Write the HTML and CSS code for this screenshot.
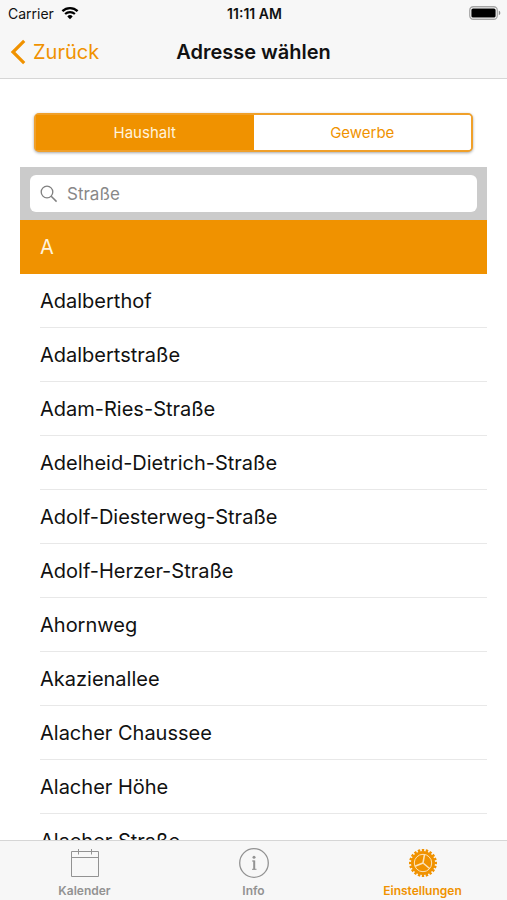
FILE: index.html
```html
<!DOCTYPE html>
<html lang="de">
<head>
<meta charset="utf-8">
<meta name="viewport" content="width=device-width, initial-scale=1">
<title>Adresse wählen</title>
<link rel="stylesheet" href="styles.css">
</head>
<body>
<header class="top">
  <div class="status">
    <span class="carrier">Carrier
      <svg class="wifi" width="18" height="14" viewBox="0 0 18 14" aria-hidden="true"><path d="M1.4 5.1a11 11 0 0 1 15.2 0" fill="none" stroke="#000" stroke-width="2.3"/><path d="M4.1 8.1a7 7 0 0 1 9.8 0" fill="none" stroke="#000" stroke-width="2.1"/><path d="M9 13.2 6.3 10.4a3.9 3.9 0 0 1 5.4 0z"/></svg>
    </span>
    <span class="time">11:11 AM</span>
    <svg class="battery" width="32" height="14" viewBox="0 0 32 14" aria-hidden="true"><rect x="0.75" y="0.75" width="27.5" height="12.5" rx="3.5" fill="#fff" stroke="#a5a5a5" stroke-width="1.3"/><rect x="2.4" y="2.4" width="24.2" height="9.2" rx="1.6"/><path d="M29.8 4.8c2 .6 2 3.8 0 4.4z" fill="#8a8a8a"/></svg>
  </div>
  <nav class="navbar">
    <a class="back" href="#"><svg width="16" height="26" viewBox="0 0 16 26" aria-hidden="true"><path d="M14.2 1.8 3 13l11.2 11.2" fill="none" stroke="currentColor" stroke-width="3.2"/></svg>Zurück</a>
    <h1 class="title">Adresse wählen</h1>
    <span></span>
  </nav>
</header>
<main class="content">
  <div class="segments">
    <button class="segment active" type="button" aria-pressed="true">Haushalt</button>
    <button class="segment" type="button" aria-pressed="false">Gewerbe</button>
  </div>
  <section class="panel">
    <div class="search">
      <label class="field">
        <svg width="18" height="18" viewBox="0 0 18 18" aria-hidden="true"><circle cx="7" cy="7" r="5.8" fill="none" stroke="#808080" stroke-width="1.3"/><path d="m11.2 11.2 5.4 5.4" stroke="#808080" stroke-width="1.5"/></svg>
        <input type="search" placeholder="Straße" aria-label="Straße">
      </label>
    </div>
    <h2 class="letter">A</h2>
    <ul class="streets">
      <li>Adalberthof</li>
      <li>Adalbertstraße</li>
      <li>Adam-Ries-Straße</li>
      <li>Adelheid-Dietrich-Straße</li>
      <li>Adolf-Diesterweg-Straße</li>
      <li>Adolf-Herzer-Straße</li>
      <li>Ahornweg</li>
      <li>Akazienallee</li>
      <li>Alacher Chaussee</li>
      <li>Alacher Höhe</li>
      <li>Alacher Straße</li>
    </ul>
  </section>
</main>
<nav class="tabs">
  <a class="tab" href="#"><svg width="32" height="32" viewBox="0 0 32 32" fill="none" stroke="currentColor" aria-hidden="true"><path d="M2.5 4.500h27v25h-27zM2.500 10.500h27M9.500 2v5.500M22.500 2v5.500"/></svg>Kalender</a>
  <a class="tab" href="#"><svg width="32" height="32" viewBox="0 0 32 32" fill="none" stroke="currentColor" aria-hidden="true"><circle cx="16" cy="16" r="14.3" stroke-width="1.3"/><circle cx="16" cy="10.2" r="1.5" fill="currentColor" stroke="none"/><path d="M14 14h2.500M14 22.300h4.500" stroke-width="1"/><path d="M16.200 13.500v9" stroke-width="2"/></svg>Info</a>
  <a class="tab current" href="#"><svg width="32" height="32" viewBox="0 0 32 32" fill="none" aria-hidden="true"><circle cx="16" cy="16" r="12" fill="currentColor"/><circle cx="16" cy="16" r="12.700" stroke="currentColor" stroke-width="2.600" pathLength="40" stroke-dasharray="1.200 0.800" stroke-dashoffset="0.600"/><circle cx="16" cy="16" r="8.700" stroke="#fbe3bb" stroke-width="1"/><path d="M16 16 17.500 7.500M16 16l-8 3.200M16 16l6.600 5.500" stroke="#fbe3bb" stroke-width="1.500"/></svg>Einstellungen</a>
</nav>
</body>
</html>
```
FILE: styles.css
```css
:root {
  --orange: #f09200;
  --bar: #f7f7f7;
}

* {
  box-sizing: border-box;
}

body {
  margin: 0;
  height: 100vh;
  display: flex;
  flex-direction: column;
  background: #fff;
  color: #111;
  font-family: Inter, "Liberation Sans", sans-serif;
}

.top {
  flex: none;
  background: var(--bar);
  border-bottom: 1px solid #d6d6d6;
}

.status {
  display: grid;
  grid-template-columns: 1fr auto 1fr;
  align-items: center;
  height: 26px;
  padding: 0 6px 0 8px;
  font-size: 14px;
}

.carrier {
  display: flex;
  align-items: center;
  gap: 7px;
}

.time {
  font-weight: 600;
}

.battery {
  justify-self: end;
}

.navbar {
  display: grid;
  grid-template-columns: 1fr auto 1fr;
  align-items: center;
  height: 52px;
  padding: 0 10px;
}

.back {
  display: flex;
  align-items: center;
  gap: 7px;
  color: var(--orange);
  font-size: 20px;
  text-decoration: none;
}

.title {
  margin: 0;
  font-size: 20px;
  font-weight: 600;
}

.content {
  flex: 1;
  min-height: 0;
  padding: 34px 20px 0;
  overflow-y: auto;
  scrollbar-width: none;
}

.segments {
  display: flex;
  height: 39px;
  margin: 0 14px 15px;
  border: 2px solid #f0a02a;
  border-radius: 5px;
  background: #fff;
  box-shadow: 0 1px 3px rgba(0, 0, 0, 0.35);
}

.segment {
  flex: 1;
  padding: 0;
  border: 0;
  border-radius: 0 3px 3px 0;
  background: #fff;
  color: var(--orange);
  font: 400 15px Inter, "Liberation Sans", sans-serif;
}

.segment.active {
  border-radius: 0;
  background: var(--orange);
  color: #fff3dd;
}

.search {
  padding: 8px 10px;
  background: #cbcbcb;
}

.field {
  display: flex;
  align-items: center;
  gap: 9px;
  height: 37px;
  padding: 0 10px;
  border-radius: 6px;
  background: #fff;
}

.field input {
  flex: 1;
  min-width: 0;
  padding: 0;
  border: 0;
  outline: 0;
  background: none;
  font: 400 17px Inter, "Liberation Sans", sans-serif;
}

.field input::placeholder {
  color: #888;
}

.letter {
  margin: 0;
  padding: 0 20px;
  background: var(--orange);
  color: #fff3dd;
  font-size: 20px;
  font-weight: 400;
  line-height: 54px;
}

.streets {
  margin: 0;
  padding: 0 0 0 20px;
  list-style: none;
}

.streets li {
  height: 54px;
  border-bottom: 1px solid #e8e8e8;
  font-size: 20px;
  line-height: 54px;
}

.tabs {
  flex: none;
  display: flex;
  height: 60px;
  background: var(--bar);
  border-top: 1px solid #d6d6d6;
}

.tab {
  flex: 1;
  display: flex;
  flex-direction: column;
  align-items: center;
  gap: 4px;
  padding-top: 6px;
  color: #929292;
  font-size: 12px;
  font-weight: 600;
  line-height: 16px;
  text-decoration: none;
}

.tab.current {
  color: var(--orange);
}
```
